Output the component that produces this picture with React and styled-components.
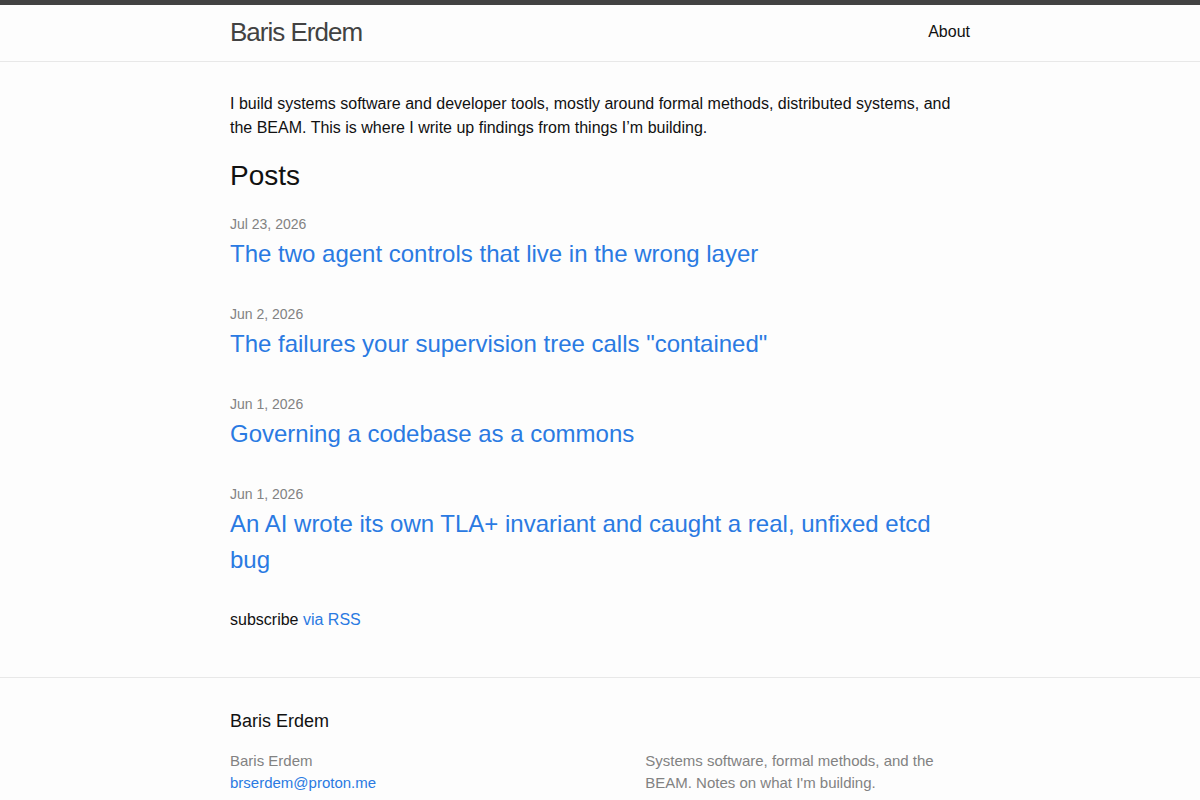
import React from "react";
import styled, { createGlobalStyle } from "styled-components";

const GlobalStyle = createGlobalStyle`
  * { box-sizing: border-box; }
  body {
    margin: 0;
    font: 400 16px/1.5 "Liberation Sans", Arial, sans-serif;
    color: #111;
    background-color: #fdfdfd;
  }
  h1, h2, h3, p, ul { margin: 0 0 15px; padding: 0; }
  a { color: #2a7ae2; text-decoration: none; }
`;

const Wrapper = styled.div`
  max-width: 800px;
  margin: 0 auto;
  padding: 0 30px;
`;

const Header = styled.header`
  box-sizing: content-box;
  border-top: 5px solid #424242;
  border-bottom: 1px solid #e8e8e8;
  min-height: 55.95px;
`;

const HeaderInner = styled(Wrapper)`
  display: flex;
  justify-content: space-between;
  align-items: flex-start;
`;

const SiteTitle = styled.a`
  font-size: 26px;
  font-weight: 300;
  line-height: 54px;
  letter-spacing: -1px;
  color: #424242;
`;

const Nav = styled.nav`
  line-height: 54px;
`;

const PageLink = styled.a`
  color: #111;
  line-height: 1.5;
`;

const Main = styled.main`
  padding: 30px 0;
`;

const PostListHeading = styled.h2`
  font-size: 28px;
  font-weight: 400;
`;

const PostList = styled.ul`
  list-style: none;
  margin-left: 0;
`;

const PostItem = styled.li`
  margin-bottom: 30px;
`;

const PostMeta = styled.span`
  font-size: 14px;
  color: #828282;
`;

const PostTitle = styled.h3`
  font-size: 24px;
  font-weight: 400;
`;

const PostLink = styled.a`
  display: block;
`;

const Footer = styled.footer`
  border-top: 1px solid #e8e8e8;
  padding: 30px 0;
`;

const FooterHeading = styled.h2`
  font-size: 18px;
  font-weight: 400;
`;

const FooterCols = styled.div`
  display: flex;
  margin-left: -15px;
  font-size: 15px;
  color: #828282;
`;

const FooterCol = styled.div`
  width: calc(${(p) => p.$pct}% - 15px);
  padding-left: 15px;
  margin-bottom: 15px;
  box-sizing: content-box;
`;

const ContactList = styled.ul`
  list-style: none;
  margin: 0;
`;

const posts = [
  { date: "Jul 23, 2026", title: "The two agent controls that live in the wrong layer" },
  { date: "Jun 2, 2026", title: 'The failures your supervision tree calls "contained"' },
  { date: "Jun 1, 2026", title: "Governing a codebase as a commons" },
  { date: "Jun 1, 2026", title: "An AI wrote its own TLA+ invariant and caught a real, unfixed etcd bug" },
];

export default function App() {
  return (
    <>
      <GlobalStyle />
      <Header>
        <HeaderInner>
          <SiteTitle href="#">Baris Erdem</SiteTitle>
          <Nav>
            <PageLink href="#">About</PageLink>
          </Nav>
        </HeaderInner>
      </Header>
      <Main>
        <Wrapper>
          <p>
            I build systems software and developer tools, mostly around formal methods, distributed
            systems, and the BEAM. This is where I write up findings from things I’m building.
          </p>
          <PostListHeading>Posts</PostListHeading>
          <PostList>
            {posts.map((p, i) => (
              <PostItem key={i}>
                <PostMeta>{p.date}</PostMeta>
                <PostTitle>
                  <PostLink href="#">{p.title}</PostLink>
                </PostTitle>
              </PostItem>
            ))}
          </PostList>
          <p>
            subscribe <a href="#">via RSS</a>
          </p>
        </Wrapper>
      </Main>
      <Footer>
        <Wrapper>
          <FooterHeading>Baris Erdem</FooterHeading>
          <FooterCols>
            <FooterCol $pct={35}>
              <ContactList>
                <li>Baris Erdem</li>
                <li>
                  <a href="#">brserdem@proton.me</a>
                </li>
              </ContactList>
            </FooterCol>
            <FooterCol $pct={20} />
            <FooterCol $pct={45}>
              <p>Systems software, formal methods, and the BEAM. Notes on what I'm building.</p>
            </FooterCol>
          </FooterCols>
        </Wrapper>
      </Footer>
    </>
  );
}
